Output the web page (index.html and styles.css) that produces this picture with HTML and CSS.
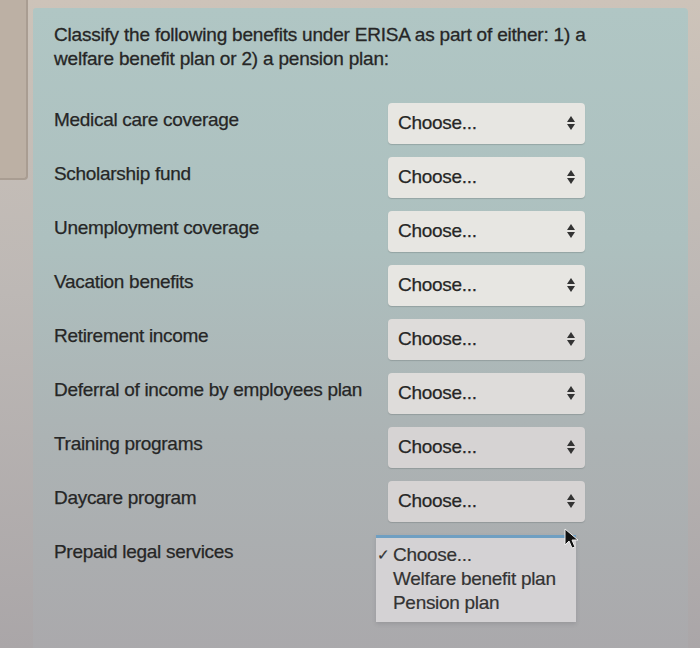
FILE: index.html
```html
<!DOCTYPE html>
<html>
<head>
	<meta charset="UTF-8">
	<title>ERISA question</title>
	<link rel="stylesheet" href="styles.css">
</head>
<body>
	<div class="side_tab"></div>
	<div id="question">
		<p class="prompt">Classify the following benefits under ERISA as part of either: 1) a welfare benefit plan or 2) a pension plan:</p>

		<div class="matches">
			<div class="label">Medical care coverage</div>
			<div class="choice"><span>Choose...</span><i class="arrows"></i></div>

			<div class="label">Scholarship fund</div>
			<div class="choice"><span>Choose...</span><i class="arrows"></i></div>

			<div class="label">Unemployment coverage</div>
			<div class="choice"><span>Choose...</span><i class="arrows"></i></div>

			<div class="label">Vacation benefits</div>
			<div class="choice"><span>Choose...</span><i class="arrows"></i></div>

			<div class="label">Retirement income</div>
			<div class="choice"><span>Choose...</span><i class="arrows"></i></div>

			<div class="label">Deferral of income by employees plan</div>
			<div class="choice"><span>Choose...</span><i class="arrows"></i></div>

			<div class="label">Training programs</div>
			<div class="choice"><span>Choose...</span><i class="arrows"></i></div>

			<div class="label">Daycare program</div>
			<div class="choice"><span>Choose...</span><i class="arrows"></i></div>

			<div class="label">Prepaid legal services</div>
			<div class="choice open">
				<div class="menu">
					<div class="option selected">Choose...</div>
					<div class="option">Welfare benefit plan</div>
					<div class="option">Pension plan</div>
				</div>
				<svg class="pointer" width="16" height="22" viewBox="0 0 16 22">
					<path d="M1 1 L1 17 L5 13 L8 20 L11 19 L8 12 L14 12 Z" fill="#111" stroke="#eee" stroke-width="1"/>
				</svg>
			</div>
		</div>

		<div class="footer_text">United Way of Lancaster</div>
	</div>
</body>
</html>
```

FILE: styles.css
```css
body {
	margin: 0;
	height: 648px;
	overflow: hidden;
	background: linear-gradient(180deg, #cdc3b9 0%, #bdb8b5 45%, #aaa6a8 100%);
	font-family: "Liberation Sans", Arial, Helvetica, sans-serif;
	color: #262626;
	position: relative;
}

.side_tab {
	position: absolute;
	left: 0;
	top: 0;
	width: 26px;
	height: 178px;
	background: #bcb0a4;
	border-right: 2px solid #a99d92;
	border-bottom: 2px solid #a99d92;
	border-radius: 0 0 4px 0;
}

#question {
	margin: 8px 0 0 33px;
	width: 655px;
	height: 660px;
	box-sizing: border-box;
	padding: 15px 0 0 21px;
	background: linear-gradient(180deg, #b0c6c4 0%, #adc0bf 35%, #acb3b4 65%, #aaa8ab 100%);
	border-radius: 3px 4px 0 0;
}

.prompt {
	margin: 0;
	width: 560px;
	font-size: 19px;
	line-height: 24px;
	letter-spacing: -0.2px;
	-webkit-text-stroke: 0.3px #262626;
}

.matches {
	display: grid;
	grid-template-columns: 334px 197px;
	grid-auto-rows: 54px;
	align-items: center;
	margin-top: 25px;
}

.label {
	font-size: 19px;
	letter-spacing: -0.3px;
	margin-top: -6px;
	-webkit-text-stroke: 0.25px #262626;
}

.choice {
	height: 41px;
	box-sizing: border-box;
	background: #e7e6e2;
	border-radius: 4px;
	box-shadow: 0 1px 1px rgba(90, 100, 100, 0.3);
	display: flex;
	align-items: center;
	justify-content: space-between;
	padding: 0 10px 0 10px;
	font-size: 19px;
	letter-spacing: -0.3px;
	-webkit-text-stroke: 0.25px #262626;
	position: relative;
}

.choice:nth-child(n+10) {
	background: #dedcda;
}

.choice:nth-child(n+14) {
	background: #d6d3d3;
}

.arrows {
	width: 8px;
	height: 14px;
	position: relative;
}

.arrows::before,
.arrows::after {
	content: "";
	position: absolute;
	left: 0;
	border-left: 4px solid transparent;
	border-right: 4px solid transparent;
}

.arrows::before {
	top: 0;
	border-bottom: 6px solid #333;
}

.arrows::after {
	bottom: 0;
	border-top: 6px solid #333;
}

.choice.open {
	background: transparent;
	box-shadow: none;
	padding: 0;
}

.menu {
	position: absolute;
	left: -12px;
	top: 0;
	width: 200px;
	padding: 5px 0 7px;
	border-top: 3px solid #6f9fc2;
	background: #d4d2d4;
	box-shadow: 0 2px 4px rgba(80, 80, 90, 0.2);
	font-size: 19px;
}

.option {
	padding-left: 17px;
	line-height: 24px;
	color: #333;
	position: relative;
	-webkit-text-stroke: 0.2px #333;
}

.option.selected::before {
	content: "\2713";
	position: absolute;
	left: 1px;
	font-size: 15px;
}

.pointer {
	position: absolute;
	left: 176px;
	top: -7px;
}

.footer_text {
	margin-top: 66px;
	padding-left: 3px;
	font-size: 19px;
	color: #4a4a4a;
}
```
